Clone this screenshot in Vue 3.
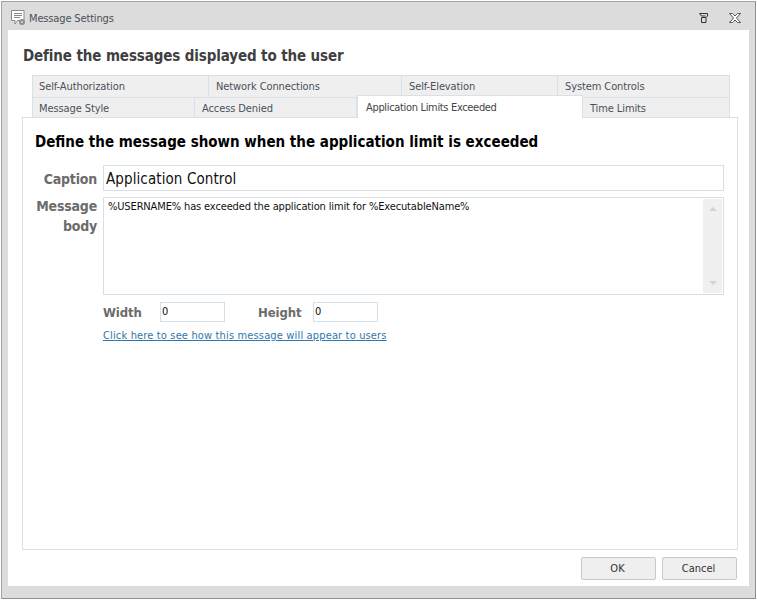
<script setup>
const row1 = [
  { label: 'Self-Authorization', w: 177 },
  { label: 'Network Connections', w: 193 },
  { label: 'Self-Elevation', w: 156 },
  { label: 'System Controls', w: 172 }
]
const row2 = [
  { label: 'Message Style', w: 163 },
  { label: 'Access Denied', w: 162 },
  { label: 'Application Limits Exceeded', w: 226, active: true },
  { label: 'Time Limits', w: 147 }
]
</script>

<template>
  <div class="window">
    <header class="titlebar">
      <svg class="app-icon" width="15" height="16" viewBox="0 0 15 16">
        <path d="M.5.500h12.500v10h-6.500l-2.500 3.500v-3.500h-3.500z" fill="#fff" stroke="#8a8a8a" />
        <path d="M3 3.500h8M3 5.500h8M3 7.500h6" stroke="#8a8a8a" />
        <circle cx="11" cy="12" r="3" fill="#8f8f8f" />
        <circle cx="11" cy="12" r="1" fill="#dcdcdc" />
      </svg>
      <span class="title">Message Settings</span>
      <svg class="pin" width="9" height="10" viewBox="0 0 9 10">
        <path d="M.5.500h8v2.500l-1.500 1.500h-4.500v5h4.500v-5M.5.500l2 2.500h4" fill="none" stroke="#333" />
      </svg>
      <svg class="close" width="12" height="10" viewBox="0 0 12 10">
        <path d="M.5.500h3l2.500 2.500 2.500-2.500h3l-4 4.500 4 4.500h-3l-2.500-2.500-2.500 2.500h-3l4-4.500z" fill="#fff" stroke="#555" />
      </svg>
    </header>

    <main class="client">
      <h1 class="heading">Define the messages displayed to the user</h1>

      <div class="tabs">
        <div class="tab-row">
          <div v-for="t in row1" :key="t.label" class="tab" :style="{ width: t.w + 'px' }">{{ t.label }}</div>
        </div>
        <div class="tab-row second">
          <div
            v-for="t in row2"
            :key="t.label"
            class="tab"
            :class="{ active: t.active }"
            :style="{ width: t.w + 'px' }"
          >{{ t.label }}</div>
        </div>
      </div>

      <section class="panel">
        <h2 class="panel-heading">Define the message shown when the application limit is exceeded</h2>

        <div class="field caption-field">
          <div class="label">Caption</div>
          <div class="input caption-input">Application Control</div>
        </div>

        <div class="field body-field">
          <div class="label">Message<br />body</div>
          <div class="input body-input">
            <div class="body-text">%USERNAME% has exceeded the application limit for %ExecutableName%</div>
            <div class="scrollbar">
              <span class="arrow up"></span>
              <span class="arrow down"></span>
            </div>
          </div>
        </div>

        <div class="size-row">
          <span class="size-label width-label">Width</span>
          <div class="input size-input">0</div>
          <span class="size-label height-label">Height</span>
          <div class="input size-input">0</div>
        </div>

        <a class="link">Click here to see how this message will appear to users</a>
      </section>

      <footer class="actions">
        <button class="btn">OK</button>
        <button class="btn">Cancel</button>
      </footer>
    </main>
  </div>
</template>

<style>
html, body { margin: 0; background: #fff; }
</style>

<style scoped>
.window {
  box-sizing: border-box;
  width: 757px;
  height: 600px;
  background: #dcdcdc;
  border: 2px solid #a3a3a3;
  border-right-color: #8f8f8f;
  border-bottom-color: #8f8f8f;
  outline: 1px solid #fff;
  outline-offset: -1px;
  padding: 0 6px 12px 6px;
  display: flex;
  flex-direction: column;
  font-family: "DejaVu Sans Condensed", "DejaVu Sans", sans-serif;
  color: #444;
}
.titlebar {
  height: 28px;
  box-sizing: border-box;
  padding-top: 4px;
  flex: none;
  display: flex;
  align-items: center;
}
.app-icon { margin: 0 0 0 3px; }
.title {
  margin-left: 3px;
  font-size: 11px;
  letter-spacing: -0.15px;
  color: #4a4f5a;
}
.pin { margin-left: auto; }
.close { margin: 0 8px 0 21px; }
.client {
  flex: 1;
  background: #fff;
  display: flex;
  flex-direction: column;
  padding: 0 11px 0 14px;
  min-height: 0;
}
.heading {
  margin: 16px 0 0 1px;
  font-size: 15px;
  line-height: 20px;
  font-weight: 700;
  letter-spacing: -0.12px;
  color: #3f3f3f;
}
.tabs { margin: 9px 0 0 10px; width: 698px; height: 42px; }
.tab-row { display: flex; height: 22px; }
.second { height: 20px; }
.tab {
  box-sizing: border-box;
  background: #efefef;
  border: 1px solid #d8e0e8;
  border-left-width: 0;
  border-bottom-width: 0;
  padding-left: 7px;
  font-size: 11px;
  line-height: 22px;
  letter-spacing: -0.1px;
  color: #4a4f5a;
}
.tab:first-child { border-left-width: 1px; padding-left: 6px; }
.tab.active {
  background: #fff;
  height: 23px;
  margin-top: -2px;
  padding-left: 8px;
  position: relative;
  border-left-width: 1px;
  z-index: 2;
  letter-spacing: -0.33px;
  line-height: 23px;
  color: #444;
}
.panel {
  box-sizing: border-box;
  height: 433px;
  border: 1px solid #d8e0e8;
  width: 716px;
  padding: 13px 13px 0 0;
  flex: none;
}
.panel-heading {
  margin: 0 0 0 12px;
  font-size: 15px;
  line-height: 22px;
  font-weight: 700;
  color: #000;
}
.field { display: flex; }
.caption-field { margin-top: 12px; }
.body-field { margin-top: 6px; }
.label {
  width: 74px;
  flex: none;
  text-align: right;
  font-size: 14px;
  line-height: 20px;
  font-weight: 700;
  letter-spacing: -0.2px;
  color: #6b6b6b;
  margin-top: -1px;
}
.caption-field .label { margin-top: 0; padding-top: 4px; }
.input {
  box-sizing: border-box;
  border: 1px solid #d4dfe8;
  background: #fff;
  color: #111;
}
.caption-input {
  margin-left: 6px;
  flex: 1;
  height: 26px;
  font-size: 15px;
  line-height: 26px;
  letter-spacing: 0.1px;
  padding-left: 2px;
}
.body-input {
  margin-left: 6px;
  flex: 1;
  height: 98px;
  display: flex;
  padding: 1px;
  font-size: 11px;
}
.body-text { flex: 1; padding: 1px 0 0 3px; line-height: 14px; letter-spacing: -0.14px; }
.scrollbar {
  width: 19px;
  background: #f0f0f0;
  display: flex;
  flex-direction: column;
  align-items: center;
  justify-content: space-between;
  padding: 8px 0;
  box-sizing: border-box;
}
.arrow { width: 0; height: 0; border-left: 4px solid transparent; border-right: 4px solid transparent; }
.up { border-bottom: 4px solid #d2d2d2; }
.down { border-top: 4px solid #d2d2d2; }
.size-row { display: flex; align-items: center; margin: 7px 0 0 80px; }
.size-label { font-size: 13px; font-weight: 700; color: #6b6b6b; letter-spacing: -0.1px; }
.width-label { width: 57px; }
.height-label { margin-left: 33px; width: 55px; }
.size-input {
  width: 65px;
  height: 20px;
  font-size: 11px;
  line-height: 18px;
  padding-left: 1px;
}
.link {
  display: block;
  margin: 7px 0 0 80px;
  font-size: 11px;
  line-height: 14px;
  letter-spacing: 0.15px;
  color: #2f78ad;
  text-decoration: underline;
  cursor: pointer;
}
.actions {
  display: flex;
  justify-content: flex-end;
  gap: 6px;
  margin-top: 7px;
  padding-right: 1px;
}
.btn {
  width: 75px;
  height: 23px;
  box-sizing: border-box;
  background: #efefef;
  border: 1px solid #c9c9c9;
  border-radius: 2px;
  font-family: inherit;
  font-size: 11px;
  color: #333;
  padding: 0 2px 0 0;
}
</style>
